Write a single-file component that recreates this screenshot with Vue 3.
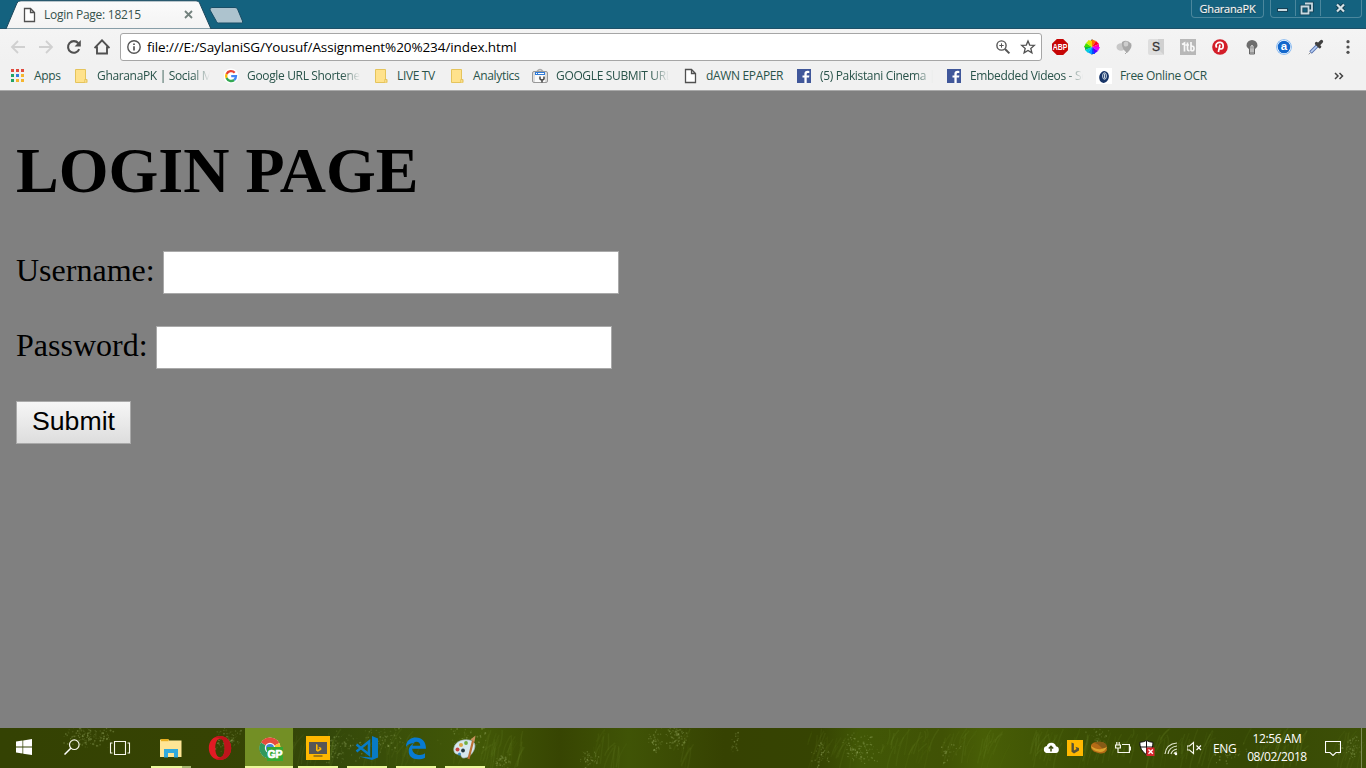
<script setup>
const icons = {
  page: '<path d="M2.5 1.5h6l4 4v9h-10z M8.5 1.5v4h4" fill="#fff" stroke="#505050" stroke-width="1.3"/>',
  back: '<path d="M15 8H2M8 2L2 8l6 6" fill="none" stroke="#d0d0d0" stroke-width="1.8"/>',
  forward: '<path d="M1 8h13M8 2l6 6-6 6" fill="none" stroke="#d0d0d0" stroke-width="1.8"/>',
  reload: '<path d="M13.2 10.2A5.8 5.8 0 1 1 12.3 4.2" fill="none" stroke="#505050" stroke-width="2.1"/><path d="M14.8 1v6.4H8.6z" fill="#505050"/>',
  home: '<path d="M.5 9L8 1.3 15.5 9M3 7.5v7h10v-7" fill="none" stroke="#505050" stroke-width="1.9"/>',
  info: '<circle cx="8" cy="8" r="6.2" fill="none" stroke="#555" stroke-width="1.4"/><path d="M8 7.2v4.2M8 4.4v1.7" stroke="#555" stroke-width="1.7"/>',
  magnify: '<circle cx="6.5" cy="6.5" r="4.6" fill="none" stroke="#555" stroke-width="1.4"/><path d="M10 10l4.4 4.4" stroke="#555" stroke-width="2"/><path d="M6.5 4.3v4.4M4.3 6.5h4.4" stroke="#555"/>',
  star: '<path d="M8 1.9l1.7 4.2 4.6.3-3.5 3 1.1 4.4L8 11.4l-3.9 2.4 1.1-4.4-3.5-3 4.6-.3z" fill="none" stroke="#505050" stroke-width="1.3"/>',
  abp: '<path d="M4.8 0h6.4L16 4.8v6.4L11.2 16H4.8L0 11.2V4.8z" fill="#c60505"/><text x="8" y="11" text-anchor="middle" textLength="14.500" lengthAdjust="spacingAndGlyphs" font-family="Liberation Sans, sans-serif" font-size="8.500" font-weight="bold" fill="#fff">ABP</text>',
  wheel: '<g transform="translate(8 8)"><path d="M-1.500-5.500L0-8 1.500-5.500zM-1.500 5.500L0 8l1.500-2.500zM-5.500-1.500L-8 0l2.500 1.500z" fill="#333"/><path d="M0 0L-4-6.500H0z" fill="#ffd000"/><path d="M0 0V-7.500L4-6z" fill="#ff7000"/><path d="M0 0l4-6 3 3z" fill="#f02"/><path d="M0 0l7-3V0z" fill="#f0a"/><path d="M0 0h8L6 4z" fill="#d0f"/><path d="M0 0l6 4-4 3z" fill="#50f"/><path d="M0 0l3 7H0z" fill="#004bff"/><path d="M0 0v7.500l-4-2z" fill="#09f"/><path d="M0 0l-4 6-3-3z" fill="#0cd"/><path d="M0 0l-7 3V0z" fill="#00bf45"/><path d="M0 0h-8l2-4z" fill="#40df00"/><path d="M0 0l-6-4 3-3z" fill="#caf000"/></g>',
  balloon: '<ellipse cx="5" cy="8" rx="4.5" ry="3.8" fill="#c8c8c8"/><path d="M6 3q5-3 9 1.5 2 4-4 9.5Q5 9 6 3" fill="#a8a8a8"/><ellipse cx="10" cy="5" rx="2.3" ry="2.6" fill="#cecece"/><path d="M11 13l-2 2" stroke="#aaa"/>',
  s: '<rect width="16" height="16" rx="2" fill="#dedede"/><path d="M10 0h6v16l-5-5z" fill="#d0d0d0"/><text x="8" y="12" text-anchor="middle" font-family="Liberation Sans, sans-serif" font-size="12" fill="#333" stroke="#333" stroke-width=".3">S</text>',
  tb: '<rect width="16" height="16" fill="#b8b8b8"/><path d="M2 5.500L4.500 4v8.500M5.500 6H9M7.500 3.500v6.500q0 2 2 1.500M11 3v9M11 7.500q3-1 3 2t-3 2" fill="none" stroke="#f7f7f7" stroke-width="1.700"/>',
  pinterest: '<circle cx="8" cy="8" r="7.8" fill="#d31d28"/><path d="M8 5.6L6.4 13M4.7 8.6C2.5 5 6 3 8.5 3.4 12 4 12 9.8 9 10q-1.3 0-1.8-1" fill="none" stroke="#fff" stroke-width="1.7"/>',
  bulb: '<path d="M2.500 6.500a5.500 5.500 0 1 1 11 0c0 2-2 2.500-2.600 4H5.100C4.500 9 2.500 8.500 2.500 6.500z" fill="#6d6d6d"/><path d="M5.5 9.500h5v5h-5z" fill="#999"/><path d="M7 13V7q1-1 2 0v6" fill="none" stroke="#ddd"/><path d="M5.500 9.500v5.500h5V9.500" fill="none" stroke="#666"/>',
  a: '<circle cx="8" cy="8" r="7.8" fill="#76b1f0"/><circle cx="8" cy="8" r="7" fill="#fff"/><circle cx="8" cy="8" r="6.3" fill="#1267cc"/><text x="8" y="11.4" text-anchor="middle" font-family="Liberation Sans, sans-serif" font-size="11.5" font-weight="bold" fill="#fff">a</text>',
  dropper: '<path d="M2.500 13.500l7-7" stroke="#5672b0" stroke-width="3.600"/><path d="M3 13l6.500-6.500" stroke="#bad0f4" stroke-width="1.700"/><path d="M.8 15.300L2.500 13.500" stroke="#888"/><path d="M8.500 4.500l3.200 3.200M10.500 5.500L13.500 2.500" stroke="#404040" stroke-width="3.200" stroke-linecap="round"/>',
  menu: '<g fill="#505050"><circle cx="8" cy="2.7" r="1.6"/><circle cx="8" cy="8" r="1.6"/><circle cx="8" cy="13.3" r="1.6"/></g>',
  apps: '<path d="M0 1h3v3H0zM5 1h3v3H5zM10 1h3v3h-3z" fill="#e04a3f"/><path d="M0 6h3v3H0zM0 11h3v3H0z" fill="#22a365"/><path d="M5 6h3v3H5z" fill="#347de0"/><path d="M10 6h3v3h-3zM5 11h3v3H5zM10 11h3v3h-3z" fill="#f5b52e"/>',
  folder: '<path d="M.5 1.5h10v10h1.3v3H.5z" fill="#ffe28c" stroke="#e5c45c"/><path d="M9.8 14.5v-3h2v3" fill="#ffe7a0" stroke="#e5c45c"/>',
  google: '<circle cx="7" cy="8" r="7.6" fill="#fff"/><g fill="none" stroke-width="2.3"><path d="M10.7 4.7A5 5 0 0 0 2.6 6" stroke="#e94235"/><path d="M2.6 6a5 5 0 0 0 0 4" stroke="#fbbc04"/><path d="M2.6 10a5 5 0 0 0 7.6 2" stroke="#34a853"/><path d="M10.2 12Q12 10.5 12 8.1H7.2" stroke="#4285f4"/></g>',
  submit: '<path d="M5 3.500Q8-.5 11 3.500" fill="none" stroke="#aaa" stroke-width="1.3"/><rect x=".5" y="3.5" width="15" height="11" rx="1.5" fill="#ddd" stroke="#999"/><path d="M3 4h10v4H3z" fill="#307bd9"/><path d="M4 5.500h1M6 5.500h6" stroke="#fff"/><path d="M3 7h10v7H3z" fill="#fafafa"/><path d="M8 8.500v2.500q2 2 4 0V8.500M10 12v2.500" fill="none" stroke="#444" stroke-width="1.5"/>',
  facebook: '<rect y="1" width="14" height="14" fill="#40579a"/><path d="M9.7 15V9.6H12l.4-2.2H9.7V6q0-1 1.2-1h1.4V3q-4.9-.8-4.9 2.8v1.6H5.5v2.2h1.9V15z" fill="#fff"/>',
  ocr: '<rect width="16" height="16" fill="#fff"/><ellipse cx="8" cy="9" rx="4.8" ry="6" transform="rotate(12 8 9)" fill="#183568"/><ellipse cx="8.5" cy="8" rx="1.900" ry="3.3" fill="none" stroke="#cad7e3"/><path d="M8.5 5.500v5" stroke="#cad7e3"/>',
  windows: '<path d="M0 2.4l6.5-.9v6H0zM7.2 1.4L16 0v7.5H7.2zM0 8.4h6.5v6L0 13.5zM7.2 8.4H16V16l-8.8-1.3z" fill="#fff"/>',
  search: '<circle cx="10.3" cy="5.7" r="4.8" fill="none" stroke="#f8f8ec" stroke-width="1.2"/><path d="M6.8 9.2L.5 15.5" stroke="#fff" stroke-width="1.5"/>',
  taskview: '<path d="M5.5 2.5h11v13h-11zM3.5 4h-2v10h2M18.5 4h2v10h-2" fill="none" stroke="#f8f8ec" stroke-width="1.1"/>',
  explorer: '<path d="M2 3h7l1 1.500h12.500V21H1V4z" fill="#ffe595"/><path d="M2 3h7.500v2.200H2z" fill="#e8af20"/><path d="M5 13h14v8.500h-4V17H9v4.500H5z" fill="#31aadd"/>',
  opera: '<path fill-rule="evenodd" d="M12 0C5.300 0 .8 5.300.8 12S5.300 24 12 24s11.200-5.300 11.200-12S18.700 0 12 0zM12 2.800c3 0 4.700 4 4.700 9.200s-1.700 9.200-4.700 9.200S7.300 17.200 7.300 12 9 2.800 12 2.800z" fill="#e11b24"/><path d="M12 0c6.700 0 11.200 5.300 11.200 12S18.700 24 12 24q-3 0-5.500-1.500 2.500.8 5.500-1.300c3 0 4.700-4 4.700-9.200S15 2.800 12 2.800Q9 1 6.500 1.500 9 0 12 0z" fill="#bd141b"/>',
  chrome: '<g transform="translate(2.500 1)"><circle cx="10.5" cy="11" r="10.5" fill="#fff"/><path d="M10.500 11L1.500 5.500A10.5 10.5 0 0 1 19.800 6z" fill="#e54d3d"/><path d="M10.500 11l9.3-5a10.5 10.5 0 0 1-8.5 15.4z" fill="#f6c72f"/><path d="M10.500 11l.7 10.5A10.5 10.5 0 0 1 1.400 5.500z" fill="#31985b"/><circle cx="10.5" cy="11" r="5.2" fill="#f8f8f8"/><circle cx="10.5" cy="11" r="4" fill="#4286d5"/></g><path d="M10 11h16v14H10z" fill="#35a832"/><text x="18" y="21.5" text-anchor="middle" font-family="Liberation Sans, sans-serif" font-size="10.5" font-weight="bold" fill="#fff" stroke="#fff" stroke-width=".7">GP</text>',
  bingdesk: '<path d="M0 0h24v24H0z" fill="#ffb800"/><path d="M3 6h18v12H3z" fill="#565656"/><path d="M7.500 20h9" stroke="#806117" stroke-width="1.4"/><path d="M10 8l1.6.7v5.2l2-1.2-1.3-2 3 1v2l-3.5 2-1.8-1.2z" fill="#ffb800"/>',
  vscode: '<path d="M17 0l6 2.500v19L17 24 4 20.500l13 1z" fill="#087bc5"/><path d="M1.500 8.500L14 18.500V5.500L1.500 15.500" fill="none" stroke="#087bc5" stroke-width="2.500"/>',
  edge: '<path d="M2 11C2 4 7 1.5 12 1.5c6 0 10 4 10 11.2H8.2c.2 4.8 4.5 6.2 7.8 6.2 2 0 3.5-.6 5-1.6v4.4c-1.8 1-4.2 1.5-7 1.5-6 0-9.3-3.2-9.3-8C4.7 11 7 8.5 11 7 6.6 7 3.5 8.5 2 11zm6.5-1.2h7.8C16.2 7 14.6 5.7 12.6 5.7c-2.4 0-3.8 1.8-4.1 4.1z" fill="#087bd2"/>',
  paint: '<path d="M2 9Q6 3 16 4c6 1 7 5 5 10q-3 7-10 8c-4 0-2-4-5-4-4 1-7-3-4-9z" fill="#d6e8ee" stroke="#a8bdc5" stroke-width=".7"/><circle cx="8" cy="9" r="2" fill="#d9a643"/><circle cx="13" cy="7" r="1.900" fill="#70ae42"/><circle cx="4.500" cy="13.500" r="2" fill="#c94643"/><circle cx="6.5" cy="18" r="1.500" fill="#3d8fc8"/><circle cx="10" cy="14.500" r="1.900" fill="#24363d"/><path d="M20 5l-4.500 18" stroke="#bc7035" stroke-width="2.2"/><path d="M22.500-.5L17.500 3.500 21.500 6z" fill="#c8915d"/>',
  cloud: '<path d="M3.5 13a3.6 3.6 0 0 1 .3-7A4.8 4.8 0 0 1 13 6.3 3.4 3.4 0 0 1 13 13z" fill="#fff"/><path d="M8 11.5V6.5M5.8 8.6L8 6.3l2.2 2.3" fill="none" stroke="#3f4d13" stroke-width="1.5"/>',
  bing: '<path d="M0 0h16v16H0z" fill="#ffb800"/><path d="M4.5 2.5l2.4 1v7l2.6-1.5-1.1-2.3L12 8v2.4l-5 3-2.5-1.6z" fill="#555237"/>',
  pill: '<path d="M0 5Q2 2 6 2q8-1 10 5v3q-2 4-7 3.500Q1 12 0 8z" fill="#b46b16"/><path d="M3 2.800Q12 0 15.500 5l.5 4Q12 11 10 7 7 3.500 3 2.800z" fill="#855b16"/><path d="M0 6q6 4 10 3t6-2q-2 5-7 5Q1 11 0 6z" fill="#dda32b"/>',
  power: '<path d="M1.8 2v3M4.2 2v3M.6 5h4.8v3H.6zM3 8v4.500h11.4V4.5H7M14.5 7h1v3h-1" fill="none" stroke="#f8f8ec" stroke-width="1.2"/>',
  shield: '<path d="M7.5.4Q10 2 14 2.3 14.3 10 7.5 14.8.5 10 .8 2.3 5 2 7.5.4z" fill="#fff" stroke="#111"/><path d="M7.5 1v13M1 7h13" stroke="#111"/><path d="M7.5 7.5h8V16h-8z" fill="#d9252c"/><path d="M9.5 9.5l4.3 4.3m0-4.3l-4.3 4.3" stroke="#fff" stroke-width="1.3"/>',
  wifi: '<g fill="none" stroke="#e0e5cc" stroke-width="1.2"><path d="M2 14Q3 4 14 3"/><path d="M5 14Q6 7 14 6"/><path d="M8 14Q9 10 14 9"/><path d="M11 14q.5-2 3-2"/></g><circle cx="13" cy="14" r="1.2" fill="#fff"/>',
  mute: '<path d="M0 6h2.5l4-3.5v11L2.5 10H0z" fill="none" stroke="#f8f8ec" stroke-width="1.1"/><path d="M9.5 5.5l4.5 4.5m0-4.5L9.5 10" stroke="#fff" stroke-width="1.1"/>',
  note: '<path d="M.5 1.500h15v11h-4.500L8 15.5l-3-3H.5z" fill="none" stroke="#fff" stroke-width="1.1"/>',
}

const bookmarks = [
  { n: 'apps', t: 'Apps', w: 64, s: 23 },
  { n: 'folder', t: 'GharanaPK | Social Media', w: 149, s: 22, fade: 1 },
  { n: 'google', t: 'Google URL Shortener', w: 151, s: 23, fade: 1 },
  { n: 'folder', t: 'LIVE TV', w: 76, s: 22 },
  { n: 'folder', t: 'Analytics', w: 81, s: 22 },
  { n: 'submit', t: 'GOOGLE SUBMIT URL', w: 151, s: 24, fade: 1 },
  { n: 'page', t: 'dAWN EPAPER', w: 114, s: 23 },
  { n: 'facebook', t: '(5) Pakistani Cinema | F', w: 150, s: 23, fade: 1 },
  { n: 'facebook', t: 'Embedded Videos - So', w: 149, s: 23, fade: 1 },
  { n: 'ocr', t: 'Free Online OCR', w: 140, s: 24 },
]
const extensions = ['abp', 'wheel', 'balloon', 's', 'tb', 'pinterest', 'bulb', 'a', 'dropper', 'menu']
const tasks = ['explorer', 'opera', 'chrome', 'bingdesk', 'vscode', 'edge', 'paint']
const tray = ['cloud', 'bing', 'pill', 'power', 'shield', 'wifi', 'mute']

let seed = 73
function rnd() {
  seed = (seed * 16807) % 2147483647
  return seed / 2147483647
}
const clusters = [[88, 8, 26, 14, 150], [228, 12, 16, 12, 90], [340, 20, 30, 18, 90], [385, 12, 22, 14, 60], [465, 12, 30, 16, 60], [502, 34, 10, 10, 40], [590, 32, 12, 10, 45], [655, 14, 8, 16, 40], [677, 8, 12, 14, 80], [736, 16, 6, 14, 20], [822, 26, 12, 16, 40], [860, 22, 22, 18, 110], [950, 24, 12, 16, 30], [1100, 8, 16, 10, 30], [1230, 26, 20, 14, 35], [1350, 22, 14, 16, 50]]
const specks = clusters.flatMap(([x, y, rx, ry, n]) =>
  Array.from({ length: n }, () => ({
    x: x + (rnd() + rnd() - 1) * rx,
    y: y + (rnd() + rnd() - 1) * ry,
    r: 0.5 + rnd() * 0.5,
    o: 0.08 + rnd() * 0.25,
  })),
)
const bands = [[310, 55], [390, 60], [475, 50], [510, 30], [605, 30], [680, 18], [830, 45], [905, 50], [970, 60], [1080, 100], [1170, 80], [1270, 60], [1345, 25]]
const streaks = bands.flatMap(([x, w]) =>
  Array.from({ length: Math.round(w / 2) }, () => {
    const a = x + (rnd() - 0.5) * w
    const y = rnd() * 20
    const b = 8 + rnd() * 22
    return { d: `M${a} ${y + b}q${rnd() * 4} ${-b / 2} ${rnd() * 12} ${-b}`, o: 0.04 + rnd() * 0.1 }
  }),
)
</script>

<template>
  <div class="screen">
    <header class="titlebar">
      <svg class="tabs" width="250" height="29" viewBox="0 0 250 29">
        <defs><linearGradient id="tabfill" x2="0" y2="1"><stop stop-color="#fbfbfb" /><stop offset="1" stop-color="#f3f3f3" /></linearGradient></defs>
        <path d="M6 29L17 3Q18 .8 21 .8H196q2.500 0 3.500 2L211 29z" fill="url(#tabfill)" stroke="#1b465b" />
        <path d="M212 7.500h23q2 0 2.500 1.500l5 12q.5 2-1 2h-23q-1.500 0-2-1.500L210 10q-.5-2.500 2-2.500z" fill="#adc3ce" stroke="#184d66" />
      </svg>
      <div class="tab">
        <svg width="16" height="16" v-html="icons.page" />
        <span class="tabtitle">Login Page: 18215</span>
        <svg class="close" width="9" height="9"><path d="M1 1l7 7m0-7L1 8" stroke="#73817d" stroke-width="1.8" /></svg>
      </div>
      <div class="profile">GharanaPK</div>
      <div class="winbtns">
        <svg width="92" height="17" viewBox="0 0 92 17">
          <path d="M24.500 0v16M49.500 0v16" stroke="#4b879d" />
          <rect x="6.500" y="8.500" width="10" height="3" fill="#c9dae1" stroke="#164257" />
          <path d="M34 3.500h7v7h-2.500M30.500 6.500h7v7h-7z" fill="none" stroke="#123e51" stroke-width="3.500" /><path d="M34 3.500h7v7h-2.500M30.500 6.500h7v7h-7z" fill="none" stroke="#c9dae1" stroke-width="1.800" />
          <path d="M66 4.500l7 7m0-7l-7 7" stroke="#123e51" stroke-width="4" /><path d="M66 4.500l7 7m0-7l-7 7" stroke="#d5e3e8" stroke-width="2.200" />
        </svg>
      </div>
    </header>

    <nav class="toolbar">
      <div class="navbtns"><svg v-for="n in ['back', 'forward', 'reload', 'home']" :key="n" width="16" height="16" v-html="icons[n]" /></div>
      <div class="address">
        <svg width="16" height="16" v-html="icons.info" />
        <span class="url">file:///E:/SaylaniSG/Yousuf/Assignment%20%234/index.html</span>
        <svg class="mag" width="16" height="16" v-html="icons.magnify" />
        <svg width="16" height="16" v-html="icons.star" />
      </div>
      <div class="exts"><span v-for="n in extensions" :key="n"><svg width="16" height="16" v-html="icons[n]" /></span></div>
    </nav>

    <div class="bookmarks">
      <div v-for="(b, i) in bookmarks" :key="i" class="bm" :style="{ width: b.w + 'px' }">
        <span class="bmicon" :style="{ width: b.s + 'px' }"><svg width="16" height="16" v-html="icons[b.n]" /></span>
        <span class="bmtext" :class="{ fade: b.fade }">{{ b.t }}</span>
      </div>
      <svg class="more" width="10" height="8"><path d="M1 1l3 3-3 3M5.500 1l3 3-3 3" fill="none" stroke="#444" stroke-width="1.500" /></svg>
    </div>

    <main class="page">
      <h1>LOGIN PAGE</h1>
      <div class="row"><label for="user">Username:</label><input id="user" type="text"></div>
      <div class="row"><label for="pass">Password:</label><input id="pass" type="password"></div>
      <button type="button">Submit</button>
    </main>

    <footer class="taskbar">
      <svg class="grass" width="1366" height="40" viewBox="0 0 1366 40">
        <defs>
          <linearGradient id="meadow"><stop stop-color="#344203" /><stop offset=".16" stop-color="#364303" /><stop offset=".24" stop-color="#34480a" /><stop offset=".35" stop-color="#425807" /><stop offset=".41" stop-color="#374502" /><stop offset=".46" stop-color="#405406" /><stop offset=".53" stop-color="#364202" /><stop offset=".6" stop-color="#364402" /><stop offset=".63" stop-color="#415706" /><stop offset=".69" stop-color="#405205" /><stop offset=".72" stop-color="#485e06" /><stop offset=".8" stop-color="#3a4d04" /><stop offset=".91" stop-color="#364804" /><stop offset="1" stop-color="#3d5007" /></linearGradient>
        </defs>
        <rect width="1366" height="40" fill="url(#meadow)" />
        <path v-for="(s, i) in streaks" :key="'s' + i" :d="s.d" fill="none" stroke="#7b9737" stroke-width="1.5" :opacity="s.o" />
        <circle v-for="(p, i) in specks" :key="'p' + i" :cx="p.x" :cy="p.y" :r="p.r" fill="#b7cb83" :opacity="p.o" />
      </svg>
      <div class="system">
        <span><svg width="16" height="16" v-html="icons.windows" /></span>
        <span><svg width="16" height="16" v-html="icons.search" /></span>
        <span><svg width="22" height="18" v-html="icons.taskview" /></span>
      </div>
      <div class="tasks"><span v-for="n in tasks" :key="n" :class="n"><svg width="24" height="24" viewBox="0 0 24 24" overflow="visible" v-html="icons[n]" /></span></div>
      <div class="tray">
        <span v-for="n in tray" :key="n"><svg width="16" height="16" v-html="icons[n]" /></span>
      </div>
      <div class="lang">ENG</div>
      <div class="clock"><div class="time">12:56 AM</div><div class="date">08/02/2018</div></div>
      <svg class="note" width="16" height="16" v-html="icons.note" />
      <div class="desk"></div>
    </footer>
  </div>
</template>

<style>
html, body { margin: 0; overflow: hidden; }
</style>

<style scoped>
* { box-sizing: border-box; }
svg { display: block; flex: none; }
.screen { width: 1366px; height: 768px; display: flex; flex-direction: column; overflow: hidden; background: #808080; font: 12px "Open Sans", "Noto Sans", sans-serif; }
.titlebar { position: relative; height: 29px; background: #14627f; border-bottom: 1px solid #1d5068; display: flex; align-items: flex-start; }
.tabs { position: absolute; left: 0; top: 0; }
.tab { position: relative; width: 200px; height: 29px; display: flex; align-items: center; padding-left: 22px; color: #36524c; }
.tabtitle { width: 140px; margin-left: 6px; white-space: nowrap; letter-spacing: -.26px; }
.profile { width: 73px; height: 18px; margin-left: 991px; border: 1px solid #4b879d; border-top: 0; border-radius: 0 0 4px 4px; color: #fff; text-align: center; line-height: 18px; font-size: 11px; letter-spacing: -.2px; text-shadow: 0 1px 1px #07384a, 0 0 1px #07384a, 0 0 1px #fff; }
.winbtns { width: 92px; height: 18px; margin-left: 6px; border: 1px solid #4b879d; border-top: 0; border-radius: 0 0 4px 4px; }
.toolbar { height: 33px; background: linear-gradient(#f4f4f4, #f1f1f1); display: flex; align-items: center; padding: 3px 0 0 10px; }
.navbtns { width: 110px; display: flex; gap: 12px; }
.address { width: 922px; height: 28px; background: #fff; border: 1px solid #a6a6a6; border-radius: 3px; display: flex; align-items: center; padding: 0 5px; margin-right: 2px; }
.url { margin-left: 5px; color: #000; font-size: 13.5px; letter-spacing: -.09px; white-space: nowrap; }
.mag { margin-left: auto; margin-right: 9px; }
.exts { display: flex; }
.exts span { width: 32px; display: flex; justify-content: center; }
.bookmarks { height: 29px; background: #f1f1f1; border-bottom: 1px solid #a9a9a9; display: flex; align-items: center; padding-left: 11px; color: #29534a; }
.bm { display: flex; align-items: center; flex: none; }
.bmicon { flex: none; }
.bmtext { white-space: nowrap; letter-spacing: -.34px; line-height: 18px; }
.fade { width: 113px; overflow: hidden; mask-image: linear-gradient(90deg, #000 84%, transparent); }
.more { margin-left: auto; margin-right: 22px; }
.page { height: 637px; padding: 43px 16px 0; background: #808080; display: flex; flex-direction: column; align-items: flex-start; font-family: "Liberation Serif", serif; color: #000; }
h1 { margin: 0 0 43px; font-size: 64px; line-height: 74px; font-weight: bold; white-space: nowrap; }
.row { display: flex; gap: 8px; height: 43px; margin-bottom: 32px; font-size: 32px; line-height: 38px; }
.row label { white-space: nowrap; }
.row input { width: 456px; height: 43px; padding: 2px; border: 1px solid #a9a9a9; border-radius: 0; background: #fff; outline: 0; }
button { width: 115px; height: 43px; padding: 0 0 2px; border: 1px solid #a9a9a9; border-radius: 0; background: linear-gradient(#f6f6f6, #dddddd); color: #000; font: 26.67px "Liberation Sans", sans-serif; }
.taskbar { position: relative; height: 40px; display: flex; align-items: center; color: #fff; }
.grass { position: absolute; left: 0; top: 0; }
.taskbar > div, .note { position: relative; }
.system { width: 147px; display: flex; }
.system span { width: 48px; display: flex; justify-content: center; flex: none; }
.tasks { height: 40px; display: flex; flex: none; }
.tasks span { width: 49px; height: 40px; display: flex; justify-content: center; align-items: center; padding-right: 1px; position: relative; }
.tasks span::after { content: ""; position: absolute; left: 4px; bottom: 0; width: 40px; height: 2px; background: #eaf99b; }
.tasks .opera::after { display: none; }
.tasks .explorer::after { background: linear-gradient(90deg, #eaf99b 31px, #a5b66e 31px); }
.tasks .chrome { background: #738f25; background-clip: content-box; padding: 0 1px 0 0; }
.tasks .chrome::after { left: 0; width: 48px; }
.tray { display: flex; margin-left: 549px; }
.tray span { width: 24px; display: flex; justify-content: center; }
.lang { width: 24px; margin-left: 6px; letter-spacing: -.4px; white-space: nowrap; }
.clock { width: 76px; margin-left: 2px; text-align: center; line-height: 18px; letter-spacing: -.4px; white-space: nowrap; }
.note { margin-left: 10px; }
.desk { width: 1px; height: 40px; margin-left: 20px; background: #7c8a55; }
</style>
